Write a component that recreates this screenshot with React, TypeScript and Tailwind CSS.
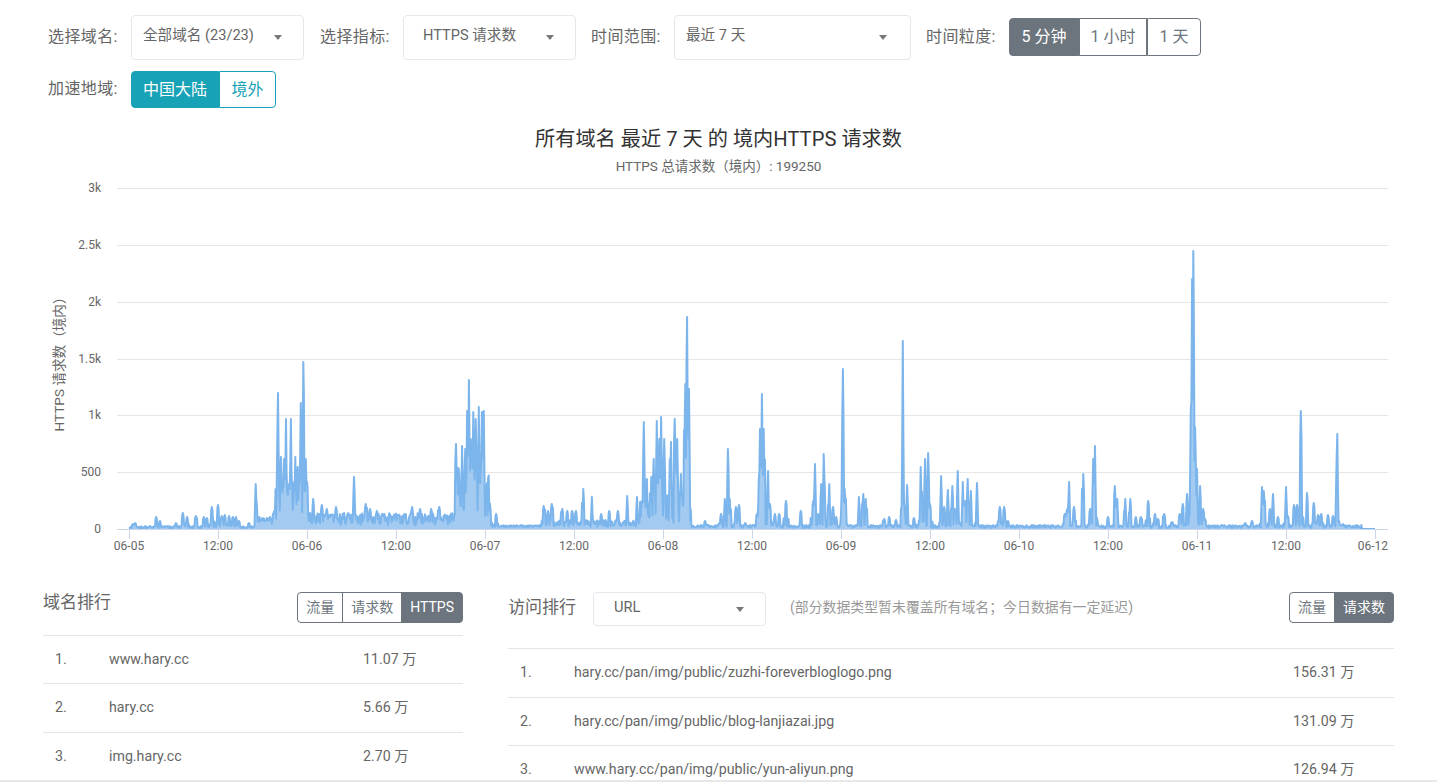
import React from "react";

const SPIKES: [number, number][] = [
  [133,5],[135,6],[150,3],[156,12],[160,8],[168,3],[176,6],[183,16],[187,12],[196,13],[204,12],[207,11],[212,22],[218,24],[222,13],[225,14],[229,13],[233,12],[236,12],[239,8],[249,6],[256,45],[262,10],[270,12],[274,18],
  [278,136],[281,72],[284,70],[286,110],[291,110],[295,72],[298,62],[301,126],[303.5,167],[306,70],
  [313,30],[322,24],[327,20],[336,22],[354,52],[366,25],[370,20],[377,18],[384,15],[398,14],[412,22],[420,20],[431,20],[439,22],
  [456,85],[459,58],[462,83],[465,80],[467,118],[469,149],[471,90],[473,117],[476,110],[479,122],[482,117],[484,118],[486,40],[490,22],[496,15],
  [544,23],[548,18],[552,25],[562,20],[567,18],[572,18],[576,18],[583,40],[592,32],[601,15],[609,18],[618,18],[627,33],[637,32],
  [644,107],[647,50],[651,52],[654,70],[657,108],[659,90],[661,112],[664,90],[670,70],[671,87],[675,110],[677,90],[681,55],[685,145],[687,212],[689,140],
  [705,8],[721,15],[725,30],[728,80],[730,30],[736,22],[739,24],[745,6],[757,15],[759,50],[760,100],[762,135],[764,100],[768,58],[770,25],[775,15],[779,15],[786,28],[801,18],
  [813,28],[815,65],[818,15],[821,45],[824,75],[829,45],[833,22],[836,12],[842,60],[843,160],[845,40],[859,32],[863,35],[866,30],[884,10],[889,12],[896,9],[903,188],[907,44],[914,11],[921,62],[925,70],[928,76],[930,25],
  [941,53],[944,22],[948,39],[952,43],[955,20],[958,58],[963,47],[965,28],[968,50],[971,38],[977,46],[1000,22],[1004,22],[1008,8],
  [1065,15],[1067,20],[1069,47],[1074,22],[1083,55],[1090,20],[1093,70],[1095,83],[1108,12],[1115,43],[1117,30],[1125,30],[1130,30],[1136,12],[1141,12],[1148,28],[1155,15],[1158,10],[1164,15],[1172,7],
  [1180,15],[1183,25],[1187,35],[1191,120],[1192,250],[1193,278],[1195,102],[1197,60],[1200,43],[1203,20],[1205,10],
  [1222,4],[1245,6],[1252,8],[1262,42],[1264,38],[1270,20],[1273,35],[1278,12],[1286,42],[1288,13],[1294,24],[1297,24],[1301,118],[1307,36],[1314,26],[1318,14],[1321,15],[1328,14],[1333,13],[1337,95],[1343,5],[1350,3],
];

const BASE: [number, number, number, number][] = [
  [129,255,0.5,3],[255,275,5,12],[275,308,8,48],[308,455,4,16],[455,490,10,62],[490,540,2,4],[540,640,2,9],[640,690,6,36],[690,1362,1,4],[1362,1377,0,0],
];

function series() {
  let s = 12345;
  const rnd = () => {
    s = (s * 1664525 + 1013904223) >>> 0;
    return s / 4294967296;
  };
  const pts: [number, number][] = [];
  for (let i = 0; i <= 2016; i++) {
    const x = 129 + i * (1246 / 2016);
    const seg = BASE.find((b) => x >= b[0] && x < b[1]);
    let h = seg ? seg[2] + (seg[3] - seg[2]) * rnd() : 0;
    for (const [sx, sh] of SPIKES) {
      const d = Math.abs(x - sx);
      if (d <= 0.31) h = Math.max(h, sh);
      else if (d < 1) h = Math.max(h, sh * (sh < 30 ? 0.85 : 0.45 + 0.35 * rnd()));
      else if (d < 2.5) h = Math.max(h, sh * (sh < 30 ? 0.4 : 0.14) * rnd());
    }
    pts.push([x, 529 - h]);
  }
  return pts;
}

const PTS = series();
const LINE = PTS.map((p, i) => `${i ? "L" : "M"}${p[0].toFixed(1)} ${p[1].toFixed(1)}`).join(" ");
const AREA = `${LINE} L1375 529 L129 529 Z`;

const YS: [string, number][] = [["3k",188],["2.5k",245],["2k",302],["1.5k",359],["1k",415],["500",472],["0",529]];
const XS = ["06-05","12:00","06-06","12:00","06-07","12:00","06-08","12:00","06-09","12:00","06-10","12:00","06-11","12:00","06-12"];

function Chart() {
  return (
    <svg viewBox="0 180 1437 380" className="block w-full h-[380px]">
      {YS.map(([t, y]) => (
        <g key={t}>
          {t !== "0" && <line x1={117} x2={1388} y1={y + 0.5} y2={y + 0.5} stroke="#e6e6e6" />}
          <text x={101} y={y + 4} textAnchor="end" fontSize={12} fill="#666666">{t}</text>
        </g>
      ))}
      <text transform="translate(64 361) rotate(-90)" textAnchor="middle" fontSize={13.6} fill="#666666">HTTPS 请求数（境内）</text>
      <path d={AREA} fill="#7cb5ec" fillOpacity={0.7} />
      <path d={LINE} fill="none" stroke="#7cb5ec" strokeWidth={2} strokeLinejoin="round" />
      <line x1={117} x2={1388} y1={529.5} y2={529.5} stroke="#ccd6eb" />
      {XS.map((t, i) => {
        const x = 129 + i * 89;
        return (
          <g key={i}>
            <line x1={x + 0.5} x2={x + 0.5} y1={529} y2={539} stroke="#ccd6eb" />
            <text x={i === 14 ? 1388 : x} y={550} textAnchor={i === 14 ? "end" : "middle"} fontSize={12} fill="#666666">{t}</text>
          </g>
        );
      })}
    </svg>
  );
}

function Caret() {
  return <span className="w-0 h-0 border-x-[4px] border-x-transparent border-t-[5px] border-t-[#777777]" />;
}

function Select({ width, pad, arrow, children }: { width: string; pad: string; arrow: string; children: React.ReactNode }) {
  return (
    <div className={`${width} h-[45px] bg-white border border-[#e4e7ed] rounded flex items-center justify-between text-[14.6px] text-[#666666] ${pad} ${arrow}`}>
      <span className="-mt-[3px] -ml-px">{children}</span>
      <Caret />
    </div>
  );
}

function Label({ className, children }: { className?: string; children: React.ReactNode }) {
  return <div className={`w-[83px] -mt-[2px] text-[16px] tracking-[0.4px] text-[#666666] ${className ?? ""}`}>{children}</div>;
}

function Seg({ items, widths, active, color, height, small, className }: { items: string[]; widths?: string[]; active: number; color: "gray" | "teal"; height: string; small?: boolean; className?: string }) {
  const on = color === "gray" ? "bg-[#6c757d] border-[#6c757d] text-white" : "bg-[#17a2b8] border-[#17a2b8] text-white";
  const off = color === "gray" ? "bg-white border-[#6c757d] text-[#6c757d]" : "bg-white border-[#17a2b8] text-[#17a2b8]";
  return (
    <div className={`flex ${className ?? ""}`}>
      {items.map((t, i) => (
        <div
          key={t}
          className={`border flex items-center justify-center ${height} ${widths ? widths[i] : ""} ${small ? "px-2 text-[14px] -ml-px first:ml-0" : "text-[16px]"} ${i === active ? on : off} ${i === 0 ? "rounded-l" : ""} ${i === items.length - 1 ? "rounded-r" : ""}`}
        >
          {t}
        </div>
      ))}
    </div>
  );
}

function RankRow({ n, name, value, numW, nameW, h }: { n: number; name: string; value: string; numW: string; nameW: string; h: string }) {
  return (
    <div className={`${h} border-t border-[#e5e5e5] flex items-center text-[14.2px] text-[#666666] pl-3`}>
      <span className={numW}>{n}.</span>
      <span className={nameW}>{name}</span>
      <span>{value}</span>
    </div>
  );
}

export default function App() {
  return (
    <div className="h-[782px] overflow-hidden bg-white font-['Roboto','Noto_Sans_CJK_SC',sans-serif] border-b-2 border-[#e8e8e8] pt-[15px]">
      <div className="flex items-center pl-[48px] h-[45px]">
        <Label>选择域名:</Label>
        <Select width="w-[173px]" pad="pl-[12px]" arrow="pr-[21px]">全部域名 (23/23)</Select>
        <Label className="ml-4">选择指标:</Label>
        <Select width="w-[173px]" pad="pl-[20px]" arrow="pr-[21px]">HTTPS 请求数</Select>
        <Label className="ml-[15px]">时间范围:</Label>
        <Select width="w-[237px]" pad="pl-[12px]" arrow="pr-[23px]">最近 7 天</Select>
        <Label className="ml-[15px]">时间粒度:</Label>
        <Seg className="-mt-px" height="h-[38px]" items={["5 分钟", "1 小时", "1 天"]} widths={["w-[70px]", "w-[68px]", "w-[54px]"]} active={0} color="gray" />
      </div>
      <div className="flex items-center pl-[48px] h-[37px] mt-[11px]">
        <Label>加速地域:</Label>
        <Seg height="h-[37px]" items={["中国大陆", "境外"]} widths={["w-[88px]", "w-[57px]"]} active={0} color="teal" />
      </div>
      <div className="mt-[17px] h-[28px] leading-[28px] text-center text-[20.2px] text-[#333333]">所有域名 最近 7 天 的 境内HTTPS 请求数</div>
      <div className="mt-[3px] h-[20px] leading-[20px] text-center text-[13.5px] text-[#666666]">HTTPS 总请求数（境内）: 199250</div>
      <div className="mt-[4px]"><Chart /></div>
      <div className="mt-[32px] flex gap-[45px] pl-[43px]">
        <div className="w-[420px]">
          <div className="flex justify-between h-[43px]">
            <div className="text-[17px] text-[#666666] leading-[20px]">域名排行</div>
            <Seg height="h-[31px]" items={["流量", "请求数", "HTTPS"]} active={2} color="gray" small />
          </div>
          <RankRow h="h-[48px]" numW="w-[54px]" nameW="w-[254px]" n={1} name="www.hary.cc" value="11.07 万" />
          <RankRow h="h-[49px]" numW="w-[54px]" nameW="w-[254px]" n={2} name="hary.cc" value="5.66 万" />
          <RankRow h="h-[48px]" numW="w-[54px]" nameW="w-[254px]" n={3} name="img.hary.cc" value="2.70 万" />
          <div className="border-t border-[#e5e5e5]" />
        </div>
        <div className="w-[886px]">
          <div className="flex items-start h-[56px]">
            <div className="w-[85px] h-[31px] flex items-center text-[17px] text-[#666666]">访问排行</div>
            <div className="w-[173px] h-[34px] bg-white border border-[#e4e7ed] rounded flex items-center justify-between pl-5 pr-[21px] text-[14.6px] text-[#666666]">
              <span className="-mt-[2px]">URL</span>
              <Caret />
            </div>
            <div className="ml-[24px] h-[31px] flex items-center text-[13.9px] text-[#999999]">(部分数据类型暂未覆盖所有域名；今日数据有一定延迟)</div>
            <div className="ml-auto"><Seg height="h-[31px]" items={["流量", "请求数"]} active={1} color="gray" small /></div>
          </div>
          <RankRow h="h-[49px]" numW="w-[54px]" nameW="w-[719px]" n={1} name="hary.cc/pan/img/public/zuzhi-foreverbloglogo.png" value="156.31 万" />
          <RankRow h="h-[48px]" numW="w-[54px]" nameW="w-[719px]" n={2} name="hary.cc/pan/img/public/blog-lanjiazai.jpg" value="131.09 万" />
          <RankRow h="h-[48px]" numW="w-[54px]" nameW="w-[719px]" n={3} name="www.hary.cc/pan/img/public/yun-aliyun.png" value="126.94 万" />
        </div>
      </div>
    </div>
  );
}
